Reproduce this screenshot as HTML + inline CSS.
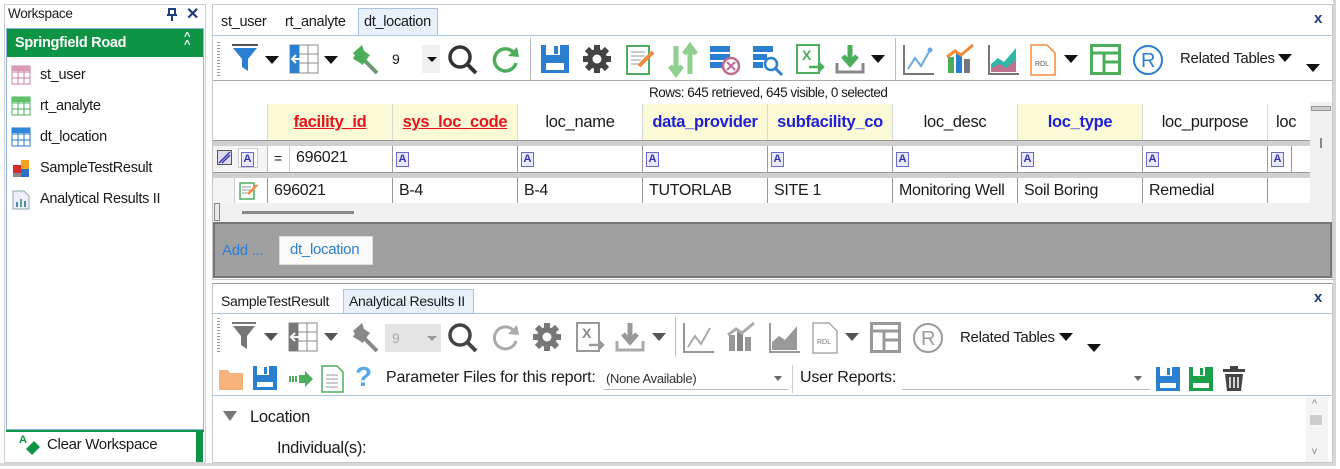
<!DOCTYPE html>
<html><head><meta charset="utf-8">
<style>
*{margin:0;padding:0;box-sizing:border-box}
body{width:1340px;height:469px;background:#fff;position:relative;overflow:hidden;font-family:"Liberation Sans",sans-serif;font-size:13px;color:#1a1a1a}
.a{position:absolute}
.t{position:absolute;white-space:nowrap;letter-spacing:-0.3px}
svg{position:absolute;overflow:visible}
.tri{position:absolute;width:0;height:0;border-left:7px solid transparent;border-right:7px solid transparent;border-top:8px solid #111}
.trig{position:absolute;width:0;height:0;border-left:7px solid transparent;border-right:7px solid transparent;border-top:8px solid #555}
.hc{position:absolute;top:104px;height:36px;border-right:1px solid #d8d8d8;text-align:center;line-height:36px;font-size:16.5px;letter-spacing:-0.3px}
.y{background:#fafad7}
.red{color:#e8141b;text-decoration:underline;font-weight:bold}
.blu{color:#1f1fd8;font-weight:bold}
.fc{position:absolute;top:146px;height:26px;border-right:1px solid #999;background:#fff}
.dc{position:absolute;top:178px;height:25px;border-right:1px solid #999;line-height:25px;padding-left:6px;font-size:16px;letter-spacing:-0.3px;background:#fff;overflow:hidden;white-space:nowrap}
.fa{position:absolute;left:3px;top:6px;width:13px;height:15px;border:1px solid #6a6ac8;background:#e8e8ff;color:#3434b0;font-size:11px;line-height:13px;text-align:center;font-weight:bold}
</style></head><body>
<div class="a" style="left:0;top:0;width:1336px;height:466px;border-right:3px solid #d6d6d6;border-bottom:3px solid #d6d6d6"></div>
<div class="a" style="left:4px;top:4px;width:202px;height:459px;background:#fff;border:1px solid #d0d0d0"></div>
<div class="t" style="left:8px;top:6px;font-size:13.5px">Workspace</div>
<svg style="left:166px;top:8px" width="12" height="14"><path d="M2 1H10M3 1V7H9V1M1 7H11M6 7V13" stroke="#1d3d7d" stroke-width="2" fill="none"/></svg>
<div class="t" style="left:186px;top:4px;font-size:16px;color:#1d3d7d;font-weight:bold">✕</div>
<div class="a" style="left:6px;top:28px;width:198px;height:402px;border:1px solid #8fb3dc"></div>
<div class="a" style="left:7px;top:29px;width:196px;height:28px;background:#0d9444"></div>
<div class="t" style="left:15px;top:35px;color:#fff;font-weight:bold;font-size:14.5px">Springfield Road</div>
<div class="t" style="left:184px;top:33px;color:#fff;font-size:11px;font-weight:bold;line-height:8px">^<br>^</div>
<svg style="left:11px;top:65px" width="20" height="20"><rect x="1" y="1" width="18" height="18" fill="#fff" stroke="#c97fa0"/><path d="M1 7H19M1 13H19M7 1V19M13 1V19" stroke="#c97fa0"/><rect x="1" y="1" width="18" height="5" fill="#d99bb6"/></svg>
<div class="t" style="left:40px;top:67px;font-size:14.5px">st_user</div>
<svg style="left:11px;top:96px" width="20" height="20"><rect x="1" y="1" width="18" height="18" fill="#fff" stroke="#4bb05a"/><path d="M1 7H19M1 13H19M7 1V19M13 1V19" stroke="#4bb05a"/><rect x="1" y="1" width="18" height="5" fill="#5fc06c"/></svg>
<div class="t" style="left:40px;top:98px;font-size:14.5px">rt_analyte</div>
<svg style="left:11px;top:127px" width="20" height="20"><rect x="1" y="1" width="18" height="18" fill="#fff" stroke="#2a78c8"/><path d="M1 7H19M1 13H19M7 1V19M13 1V19" stroke="#2a78c8"/><rect x="1" y="1" width="18" height="5" fill="#2f86d8"/></svg>
<div class="t" style="left:40px;top:129px;font-size:14.5px">dt_location</div>
<svg style="left:11px;top:159px" width="20" height="20"><rect x="10" y="1" width="8" height="9" fill="#f2a51c"/><rect x="2" y="6" width="8" height="8" fill="#d92b2b"/><rect x="10" y="10" width="8" height="8" fill="#2f6fd0"/><rect x="2" y="14" width="8" height="4" fill="#888"/></svg>
<div class="t" style="left:40px;top:160px;font-size:14.5px">SampleTestResult</div>
<svg style="left:12px;top:190px" width="18" height="20"><path d="M1 1H12L17 6V19H1Z" fill="#eef" stroke="#8aa"/><rect x="4" y="12" width="2" height="5" fill="#58a"/><rect x="8" y="9" width="2" height="8" fill="#5a8"/><rect x="12" y="11" width="2" height="6" fill="#58a"/></svg>
<div class="t" style="left:40px;top:191px;font-size:14.5px">Analytical Results II</div>
<div class="a" style="left:6px;top:430px;width:198px;height:32px;background:#fff;border-top:2px solid #0d9444"></div>
<div class="a" style="left:196px;top:430px;width:7px;height:32px;background:#0d9444"></div>
<svg style="left:18px;top:433px" width="24" height="24"><text x="1" y="10" font-size="11" font-weight="bold" fill="#0d9444" font-family="Liberation Sans">A</text><path d="M8 16L16 8L22 14L14 22Z" fill="#0d9444"/></svg>
<div class="t" style="left:47px;top:436px;font-size:15px">Clear Workspace</div>

<div class="a" style="left:212px;top:4px;width:1121px;height:276px;border:1px solid #c8c8c8;background:#fff"></div>
<div class="a" style="left:358px;top:8px;width:80px;height:28px;background:#e8f0fa;border:1px solid #a9c5e6;border-bottom:none"></div>
<div class="t" style="left:221px;top:14px;font-size:14.5px">st_user</div>
<div class="t" style="left:285px;top:14px;font-size:14.5px">rt_analyte</div>
<div class="t" style="left:364px;top:14px;font-size:14.5px">dt_location</div>
<div class="t" style="left:1314px;top:10px;font-size:15px;color:#1d3d7d;font-weight:bold">x</div>
<div class="a" style="left:213px;top:35px;width:1119px;height:1px;background:#a9c5e6"></div>
<div class="a" style="left:213px;top:80px;width:1119px;height:1px;background:#aaa"></div>
<div class="a" style="left:217px;top:42px;width:3px;height:34px;background:repeating-linear-gradient(#999 0 1px,transparent 1px 3px)"></div>
<svg style="left:231px;top:43px" width="28" height="30"><path d="M1 2H27" stroke="#555" stroke-width="2"/><path d="M2 5H26L17 16V28L11 24V16Z" fill="#2a7fd0"/></svg>
<div class="tri" style="left:265px;top:56px"></div>
<svg style="left:289px;top:44px" width="30" height="30"><rect x="1" y="1" width="28" height="28" fill="#fff" stroke="#888"/><path d="M10 1V29M19 1V29M1 10H29M1 19H29" stroke="#888"/><rect x="1" y="1" width="9" height="28" fill="#2a7fd0"/><path d="M14 15H4M7 11L3 15L7 19" stroke="#fff" stroke-width="2" fill="none"/></svg>
<div class="tri" style="left:324px;top:56px"></div>
<svg style="left:350px;top:43px" width="30" height="32"><path d="M3 10L12 2L14 8L20 12L12 22Z" fill="#4cae5a"/><path d="M4 14L14 20M14 17L27 30" stroke="#4cae5a" stroke-width="4"/><path d="M16 20L27 30" stroke="#888" stroke-width="2"/></svg>
<div class="t" style="left:392px;top:51px;font-size:14px">9</div>
<div class="a" style="left:422px;top:45px;width:18px;height:28px;background:#f0f0f0"></div>
<div class="a" style="left:427px;top:57px;border-left:5px solid transparent;border-right:5px solid transparent;border-top:5px solid #111"></div>
<svg style="left:447px;top:44px" width="32" height="32"><circle cx="13" cy="13" r="10" fill="none" stroke="#333" stroke-width="3.5"/><path d="M20 20L29 29" stroke="#333" stroke-width="4"/></svg>
<svg style="left:490px;top:45px" width="32" height="30"><path d="M24 8A11 11 0 1 0 26 18" fill="none" stroke="#4cae5a" stroke-width="3.5"/><path d="M18 11L29 12L27 2Z" fill="#4cae5a"/></svg>
<div class="a" style="left:530px;top:38px;width:1px;height:42px;background:#bbb"></div>
<svg style="left:540px;top:44px" width="30" height="30"><path d="M1 1H29V29H1Z" fill="#2a7fd0"/><rect x="6" y="1" width="14" height="10" fill="#fff"/><rect x="14" y="2" width="4" height="8" fill="#2a7fd0"/><rect x="6" y="19" width="18" height="7" fill="#fff"/></svg>
<svg style="left:582px;top:44px" width="30" height="30"><circle cx="15" cy="15" r="10" fill="#444"/><path d="M15 1V29M1 15H29M5 5L25 25M25 5L5 25" stroke="#444" stroke-width="6"/><circle cx="15" cy="15" r="4.5" fill="#fff"/></svg>
<svg style="left:625px;top:44px" width="32" height="32"><rect x="2" y="2" width="22" height="28" fill="#fff" stroke="#4cae5a" stroke-width="2"/><path d="M6 8H20M6 12H20M6 16H16M6 20H14" stroke="#999"/><path d="M14 22L28 8" stroke="#f28a3c" stroke-width="4"/></svg>
<svg style="left:668px;top:44px" width="30" height="32"><path d="M8 2V30M2 22L8 30L14 22M22 30V2M16 10L22 2L28 10" stroke="#8fd08f" stroke-width="5" fill="none"/></svg>
<svg style="left:709px;top:44px" width="32" height="32"><rect x="1" y="2" width="20" height="6" fill="#2a7fd0"/><rect x="1" y="10" width="20" height="6" fill="#2a7fd0"/><rect x="1" y="18" width="14" height="6" fill="#2a7fd0"/><circle cx="22" cy="22" r="8" fill="#fff" stroke="#c06a90" stroke-width="2.5"/><path d="M18 18L26 26M26 18L18 26" stroke="#c06a90" stroke-width="2"/></svg>
<svg style="left:752px;top:44px" width="32" height="32"><rect x="1" y="2" width="20" height="6" fill="#2a7fd0"/><rect x="1" y="10" width="14" height="6" fill="#2a7fd0"/><rect x="1" y="18" width="10" height="6" fill="#2a7fd0"/><circle cx="19" cy="20" r="6" fill="#fff" stroke="#2a7fd0" stroke-width="2.5"/><path d="M23 24L30 31" stroke="#2a7fd0" stroke-width="3"/></svg>
<svg style="left:795px;top:43px" width="32" height="32"><rect x="2" y="2" width="22" height="28" fill="#fff" stroke="#4cae5a" stroke-width="2"/><text x="7" y="17" font-size="14" font-weight="bold" fill="#4cae5a" font-family="Liberation Sans">X</text><path d="M14 24H28M24 20L28 24L24 28" stroke="#4cae5a" stroke-width="2.5" fill="none"/></svg>
<svg style="left:835px;top:43px" width="32" height="32"><path d="M15 2V20M8 13L15 21L22 13" stroke="#4cae5a" stroke-width="5" fill="none"/><path d="M2 20V29H28V20" stroke="#888" stroke-width="3" fill="none"/></svg>
<div class="tri" style="left:871px;top:55px"></div>
<div class="a" style="left:895px;top:38px;width:1px;height:42px;background:#bbb"></div>
<svg style="left:903px;top:44px" width="32" height="32"><path d="M1 1V30H31" stroke="#777" stroke-width="2" fill="none"/><path d="M5 25L12 14L18 22L27 6" stroke="#6aa8e0" stroke-width="2" fill="none"/><circle cx="27" cy="6" r="2.5" fill="#6aa8e0"/></svg>
<svg style="left:945px;top:43px" width="32" height="32"><rect x="3" y="14" width="6" height="16" fill="#4cae5a"/><rect x="11" y="10" width="6" height="20" fill="#2a7fd0"/><rect x="19" y="16" width="6" height="14" fill="#777"/><path d="M2 14L10 8L16 12L28 2" stroke="#f28a3c" stroke-width="3" fill="none"/></svg>
<svg style="left:988px;top:44px" width="32" height="32"><path d="M1 1V30H31" stroke="#777" stroke-width="2" fill="none"/><path d="M3 28V20L10 14L16 18L28 4V28Z" fill="#2fb8a8"/><path d="M3 28V24L12 20L18 24L28 16V28Z" fill="#c07090"/></svg>
<svg style="left:1030px;top:44px" width="26" height="32"><path d="M1 1H17L25 9V31H1Z" fill="#fff" stroke="#f28a3c" stroke-width="1.5"/><text x="5" y="22" font-size="7" fill="#555" font-family="Liberation Sans">RDL</text></svg>
<div class="tri" style="left:1064px;top:55px"></div>
<svg style="left:1090px;top:44px" width="32" height="32"><rect x="1.5" y="1.5" width="28" height="28" fill="#fff" stroke="#4cae5a" stroke-width="3"/><path d="M1 9H30M14 9V30M14 18H30" stroke="#4cae5a" stroke-width="3"/></svg>
<svg style="left:1132px;top:44px" width="32" height="32"><circle cx="16" cy="16" r="14" fill="none" stroke="#2a7fd0" stroke-width="2"/><text x="9" y="23" font-size="20" fill="#2a7fd0" font-family="Liberation Sans">R</text></svg>
<div class="t" style="left:1180px;top:50px;font-size:15px">Related Tables</div>
<div class="tri" style="left:1278px;top:54px"></div>
<div class="tri" style="left:1306px;top:64px"></div>

<div class="t" style="left:649px;top:85px;font-size:13.5px;letter-spacing:-0.5px">Rows: 645 retrieved, 645 visible, 0 selected</div>
<div class="a" style="left:213px;top:102px;width:1097px;height:101px;background:#fff"></div>
<div class="hc" style="left:213px;width:55px"></div>
<div class="hc y" style="left:268px;width:125px"><span class="red">facility_id</span></div>
<div class="hc y" style="left:393px;width:125px"><span class="red">sys_loc_code</span></div>
<div class="hc" style="left:518px;width:125px">loc_name</div>
<div class="hc y" style="left:643px;width:125px"><span class="blu">data_provider</span></div>
<div class="hc y" style="left:768px;width:125px"><span class="blu">subfacility_co</span></div>
<div class="hc" style="left:893px;width:125px">loc_desc</div>
<div class="hc y" style="left:1018px;width:125px"><span class="blu">loc_type</span></div>
<div class="hc" style="left:1143px;width:125px">loc_purpose</div>
<div class="hc" style="left:1268px;width:42px;text-align:left;padding-left:8px;border:none;overflow:hidden">loc</div>
<div class="a" style="left:213px;top:140px;width:1097px;height:6px;background:#d0d0d0;border-top:1px solid #999"></div>
<div class="a" style="left:213px;top:172px;width:1097px;height:6px;background:#d0d0d0;border-top:1px solid #999"></div>
<div class="fc" style="left:213px;width:55px;background:#f4f4f4;border-right:1px solid #bbb"></div>
<div class="a" style="left:217px;top:150px;width:15px;height:15px;border:1px solid #555;background:#dde"></div>
<svg style="left:217px;top:150px" width="15" height="15"><path d="M2 13L13 2M5 13L13 5" stroke="#3434b0" stroke-width="1.5"/></svg>
<div class="a" style="left:238px;top:148px;width:20px;height:20px;border:1px solid #ccc;background:#fff"></div>
<div class="fa" style="left:241px;top:152px;width:13px"><span>A</span></div>
<div class="fc" style="left:268px;width:22px;border-right:1px solid #ccc"><div class="t" style="left:6px;top:4px;font-size:14px">=</div></div>
<div class="fc" style="left:290px;width:103px"><div class="t" style="left:6px;top:3px;font-size:16px">696021</div></div>
<div class="fc" style="left:393px;width:125px"><div class="fa">A</div></div>
<div class="fc" style="left:518px;width:125px"><div class="fa">A</div></div>
<div class="fc" style="left:643px;width:125px"><div class="fa">A</div></div>
<div class="fc" style="left:768px;width:125px"><div class="fa">A</div></div>
<div class="fc" style="left:893px;width:125px"><div class="fa">A</div></div>
<div class="fc" style="left:1018px;width:125px"><div class="fa">A</div></div>
<div class="fc" style="left:1143px;width:125px"><div class="fa">A</div></div>
<div class="fc" style="left:1268px;width:24px"><div class="fa">A</div></div>
<div class="dc" style="left:213px;width:22px;background:#f4f4f4;border-right:1px solid #ccc"></div>
<div class="dc" style="left:235px;width:33px"><svg style="left:4px;top:4px" width="20" height="18"><rect x="1" y="1" width="14" height="16" fill="#fff" stroke="#4cae5a" stroke-width="1.5"/><path d="M3 5H12M3 8H12M3 11H9" stroke="#999"/><path d="M9 12L18 3" stroke="#f28a3c" stroke-width="2.5"/></svg></div>
<div class="dc" style="left:268px;width:125px">696021</div>
<div class="dc" style="left:393px;width:125px">B-4</div>
<div class="dc" style="left:518px;width:125px">B-4</div>
<div class="dc" style="left:643px;width:125px">TUTORLAB</div>
<div class="dc" style="left:768px;width:125px">SITE 1</div>
<div class="dc" style="left:893px;width:125px">Monitoring Well</div>
<div class="dc" style="left:1018px;width:125px">Soil Boring</div>
<div class="dc" style="left:1143px;width:125px">Remedial</div>
<div class="dc" style="left:1268px;width:42px;border:none"></div>
<div class="a" style="left:213px;top:203px;width:1119px;height:19px;background:#f0f0f0"></div>
<div class="a" style="left:1310px;top:102px;width:22px;height:120px;background:#f0f0f0"></div>
<div class="a" style="left:1311px;top:106px;width:20px;height:5px;background:#ccc;border:1px solid #999"></div>
<div class="a" style="left:1320px;top:138px;width:2px;height:10px;background:#888"></div>
<div class="a" style="left:214px;top:203px;width:6px;height:18px;border:1px solid #888;background:#e8e8e8"></div>
<div class="a" style="left:242px;top:211px;width:112px;height:3px;background:#888"></div>
<div class="a" style="left:213px;top:222px;width:1119px;height:56px;background:#a0a0a0;border:2px solid #777"></div>
<div class="t" style="left:222px;top:242px;color:#2a7fd0;font-size:15px">Add ...</div>
<div class="a" style="left:279px;top:236px;width:94px;height:29px;background:#fafafa;border:1px solid #ddd"></div>
<div class="t" style="left:290px;top:241px;color:#2a7fd0;font-size:15px">dt_location</div>

<div class="a" style="left:212px;top:283px;width:1121px;height:180px;border:1px solid #c8c8c8;border-top:1px solid #999;background:#fff"></div>
<div class="a" style="left:343px;top:289px;width:131px;height:25px;background:#e8f0fa;border:1px solid #a9c5e6;border-bottom:none"></div>
<div class="t" style="left:221px;top:293px;font-size:14px">SampleTestResult</div>
<div class="t" style="left:349px;top:293px;font-size:14px">Analytical Results II</div>
<div class="t" style="left:1314px;top:289px;font-size:15px;color:#1d3d7d;font-weight:bold">x</div>
<div class="a" style="left:213px;top:313px;width:1119px;height:1px;background:#a9c5e6"></div>
<div class="a" style="left:217px;top:318px;width:3px;height:34px;background:repeating-linear-gradient(#999 0 1px,transparent 1px 3px)"></div>
<svg style="left:231px;top:321px" width="26" height="30"><path d="M1 2H25" stroke="#777" stroke-width="2"/><path d="M2 5H24L16 15V28L10 24V15Z" fill="#777"/></svg>
<div class="trig" style="left:264px;top:333px"></div>
<svg style="left:288px;top:322px" width="30" height="30"><rect x="1" y="1" width="28" height="28" fill="#fff" stroke="#888"/><path d="M10 1V29M19 1V29M1 10H29M1 19H29" stroke="#888"/><rect x="1" y="1" width="9" height="28" fill="#777"/><path d="M14 15H4M7 11L3 15L7 19" stroke="#fff" stroke-width="2" fill="none"/></svg>
<div class="trig" style="left:324px;top:333px"></div>
<svg style="left:350px;top:321px" width="30" height="32"><path d="M3 10L12 2L14 8L20 12L12 22Z" fill="#888"/><path d="M4 14L14 20M14 17L27 30" stroke="#888" stroke-width="4"/></svg>
<div class="a" style="left:385px;top:324px;width:56px;height:28px;background:#e4e4e4"></div>
<div class="t" style="left:392px;top:330px;font-size:14px;color:#aaa">9</div>
<div class="a" style="left:427px;top:336px;border-left:5px solid transparent;border-right:5px solid transparent;border-top:5px solid #999"></div>
<svg style="left:447px;top:322px" width="32" height="32"><circle cx="13" cy="13" r="10" fill="none" stroke="#444" stroke-width="3.5"/><path d="M20 20L29 29" stroke="#444" stroke-width="4"/></svg>
<svg style="left:490px;top:323px" width="32" height="30"><path d="M24 8A11 11 0 1 0 26 18" fill="none" stroke="#aaa" stroke-width="3"/><path d="M18 11L29 12L27 2Z" fill="#aaa"/></svg>
<svg style="left:532px;top:322px" width="30" height="30"><circle cx="15" cy="15" r="10" fill="#777"/><path d="M15 1V29M1 15H29M5 5L25 25M25 5L5 25" stroke="#777" stroke-width="6"/><circle cx="15" cy="15" r="4.5" fill="#fff"/></svg>
<svg style="left:575px;top:321px" width="32" height="32"><rect x="2" y="2" width="22" height="28" fill="#fff" stroke="#999" stroke-width="2"/><text x="7" y="17" font-size="14" font-weight="bold" fill="#888" font-family="Liberation Sans">X</text><path d="M14 24H28M24 20L28 24L24 28" stroke="#999" stroke-width="2.5" fill="none"/></svg>
<svg style="left:615px;top:321px" width="32" height="32"><path d="M15 2V20M8 13L15 21L22 13" stroke="#999" stroke-width="5" fill="none"/><path d="M2 20V29H28V20" stroke="#aaa" stroke-width="3" fill="none"/></svg>
<div class="trig" style="left:652px;top:333px"></div>
<div class="a" style="left:675px;top:317px;width:1px;height:40px;background:#bbb"></div>
<svg style="left:683px;top:322px" width="32" height="32"><path d="M1 1V30H31" stroke="#999" stroke-width="2" fill="none"/><path d="M5 25L12 14L18 22L27 6" stroke="#aaa" stroke-width="2" fill="none"/></svg>
<svg style="left:726px;top:321px" width="32" height="32"><rect x="3" y="14" width="6" height="16" fill="#999"/><rect x="11" y="10" width="6" height="20" fill="#888"/><rect x="19" y="16" width="6" height="14" fill="#999"/><path d="M2 14L10 8L16 12L28 2" stroke="#aaa" stroke-width="3" fill="none"/></svg>
<svg style="left:769px;top:322px" width="32" height="32"><path d="M1 1V30H31" stroke="#999" stroke-width="2" fill="none"/><path d="M3 28V20L10 14L16 18L28 4V28Z" fill="#999"/></svg>
<svg style="left:812px;top:322px" width="26" height="32"><path d="M1 1H17L25 9V31H1Z" fill="#fff" stroke="#aaa" stroke-width="1.5"/><text x="5" y="22" font-size="7" fill="#777" font-family="Liberation Sans">RDL</text></svg>
<div class="trig" style="left:845px;top:333px"></div>
<svg style="left:870px;top:322px" width="32" height="32"><rect x="1.5" y="1.5" width="28" height="28" fill="#fff" stroke="#999" stroke-width="3"/><path d="M1 9H30M14 9V30M14 18H30" stroke="#999" stroke-width="3"/></svg>
<svg style="left:912px;top:322px" width="32" height="32"><circle cx="16" cy="16" r="14" fill="none" stroke="#999" stroke-width="2"/><text x="9" y="23" font-size="20" fill="#999" font-family="Liberation Sans">R</text></svg>
<div class="t" style="left:960px;top:329px;font-size:15px">Related Tables</div>
<div class="tri" style="left:1059px;top:333px"></div>
<div class="tri" style="left:1087px;top:344px"></div>
<svg style="left:218px;top:367px" width="26" height="24"><path d="M1 3H10L12 6H25V23H1Z" fill="#f8b27c"/></svg>
<svg style="left:252px;top:365px" width="26" height="26"><path d="M1 1H25V25H1Z" fill="#2a7fd0"/><rect x="5" y="1" width="12" height="9" fill="#fff"/><rect x="12" y="2" width="3" height="7" fill="#2a7fd0"/><rect x="5" y="17" width="16" height="5" fill="#fff"/></svg>
<svg style="left:289px;top:370px" width="26" height="18"><path d="M1 6V12M4 6V12M7 6V12" stroke="#4cae5a" stroke-width="2"/><path d="M10 5H16V1L24 9L16 17V13H10Z" fill="#4cae5a"/></svg>
<svg style="left:321px;top:365px" width="24" height="28"><path d="M1 1H16L22 7V27H1Z" fill="#fff" stroke="#4cae5a" stroke-width="1.5"/><path d="M5 10H17M5 14H17M5 18H17M5 22H17" stroke="#999"/></svg>
<div class="t" style="left:355px;top:361px;font-size:28px;color:#5aa8e8;font-weight:bold">?</div>
<div class="t" style="left:386px;top:369px;font-size:16px;letter-spacing:-0.2px">Parameter Files for this report:</div>
<div class="a" style="left:604px;top:389px;width:184px;height:1px;background:#bbb"></div>
<div class="t" style="left:606px;top:371px;font-size:13px;color:#333">(None Available)</div>
<div class="a" style="left:774px;top:376px;border-left:4px solid transparent;border-right:4px solid transparent;border-top:5px solid #666"></div>
<div class="a" style="left:792px;top:365px;width:1px;height:28px;background:#ccc"></div>
<div class="t" style="left:800px;top:369px;font-size:16px;letter-spacing:-0.2px">User Reports:</div>
<div class="a" style="left:902px;top:389px;width:248px;height:1px;background:#bbb"></div>
<div class="a" style="left:1134px;top:376px;border-left:4px solid transparent;border-right:4px solid transparent;border-top:5px solid #666"></div>
<svg style="left:1155px;top:366px" width="26" height="26"><path d="M1 1H25V25H1Z" fill="#2a7fd0"/><rect x="5" y="1" width="12" height="9" fill="#fff"/><rect x="12" y="2" width="3" height="7" fill="#2a7fd0"/><rect x="5" y="17" width="16" height="5" fill="#fff"/></svg>
<svg style="left:1188px;top:366px" width="26" height="26"><path d="M1 1H25V25H1Z" fill="#1aa04a"/><rect x="5" y="1" width="12" height="9" fill="#fff"/><rect x="12" y="2" width="3" height="7" fill="#1aa04a"/><rect x="5" y="17" width="16" height="5" fill="#fff"/></svg>
<svg style="left:1222px;top:366px" width="24" height="26"><rect x="1" y="3" width="22" height="3" fill="#444"/><rect x="8" y="0" width="8" height="3" fill="#444"/><path d="M3 8H21L19 25H5Z" fill="#444"/><path d="M8 11V22M12 11V22M16 11V22" stroke="#fff" stroke-width="1.5"/></svg>
<div class="a" style="left:213px;top:395px;width:1119px;height:1px;background:#a9c5e6"></div>
<div class="a" style="left:1306px;top:397px;width:22px;height:65px;background:#f4f4f4"></div>
<div class="t" style="left:1312px;top:398px;font-size:11px;color:#888">^</div>
<div class="a" style="left:1310px;top:415px;width:12px;height:10px;background:#cdcdcd"></div>
<div class="t" style="left:1312px;top:446px;font-size:10px;color:#888">v</div>
<div class="a" style="left:223px;top:411px;border-left:7px solid transparent;border-right:7px solid transparent;border-top:10px solid #777"></div>
<div class="t" style="left:250px;top:408px;font-size:16.5px">Location</div>
<div class="t" style="left:277px;top:439px;font-size:16.5px">Individual(s):</div>
</body></html>
